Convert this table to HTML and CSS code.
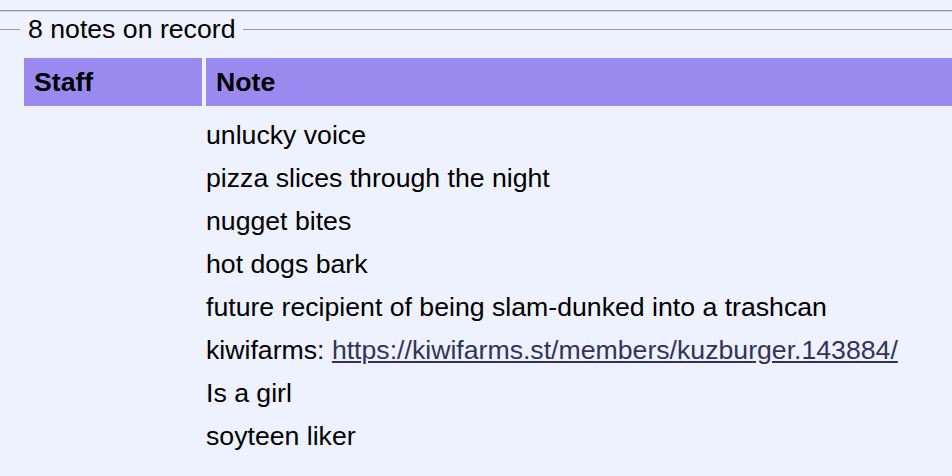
FILE: index.html
```html
<!DOCTYPE html>
<html>
<head>
<meta charset="utf-8">
<link rel="stylesheet" href="styles.css">
</head>
<body>
<div class="page">
  <div class="rule"></div>
  <fieldset class="notes">
    <legend class="notes-title">8 notes on record</legend>
    <table class="notes-table">
      <thead>
        <tr><th class="col-staff">Staff</th><th class="col-note">Note</th></tr>
      </thead>
      <tbody>
        <tr><td></td><td>unlucky voice</td></tr>
        <tr><td></td><td>pizza slices through the night</td></tr>
        <tr><td></td><td>nugget bites</td></tr>
        <tr><td></td><td>hot dogs bark</td></tr>
        <tr><td></td><td>future recipient of being slam-dunked into a trashcan</td></tr>
        <tr><td></td><td>kiwifarms: <a class="link" href="#">https://kiwifarms.st/members/kuzburger.143884/</a></td></tr>
        <tr><td></td><td>Is a girl</td></tr>
        <tr><td></td><td>soyteen liker</td></tr>
      </tbody>
    </table>
  </fieldset>
</div>
</body>
</html>
```
FILE: styles.css
```css
html, body {
  margin: 0;
  padding: 0;
  background: #eef2fe;
}
body {
  font-family: "Liberation Sans", Arial, sans-serif;
  font-size: 26.67px;
  color: #000;
  overflow: hidden;
  height: 476px;
}
.page {
  padding-top: 10px;
  width: 1100px;
}
.rule {
  border-top: 1px solid #9a9a9a;
  border-bottom: 1px solid #cfd2de;
}
.notes {
  margin: 2px 0 0 0;
  border: 0;
  border-top: 1px solid #9a9a9a;
  box-shadow: 0 1px 0 0 transparent;
  padding: 10px 0 0 20px;
  min-width: 0;
}
.notes-title {
  padding: 0 8px;
  line-height: 30px;
}
.notes-table {
  border-spacing: 4px;
  border-collapse: separate;
}
.notes-table th {
  background: #9a89ee;
  text-align: left;
  font-weight: bold;
  height: 48px;
  padding: 0 9px 0 10px;
  box-sizing: border-box;
}
.col-staff {
  width: 178px;
}
.col-note {
  width: 800px;
}
.notes-table td {
  height: 39px;
  box-sizing: border-box;
  padding: 11px 0 0 0;
  line-height: 28px;
  vertical-align: top;
}
.link {
  color: #33335c;
}
```
